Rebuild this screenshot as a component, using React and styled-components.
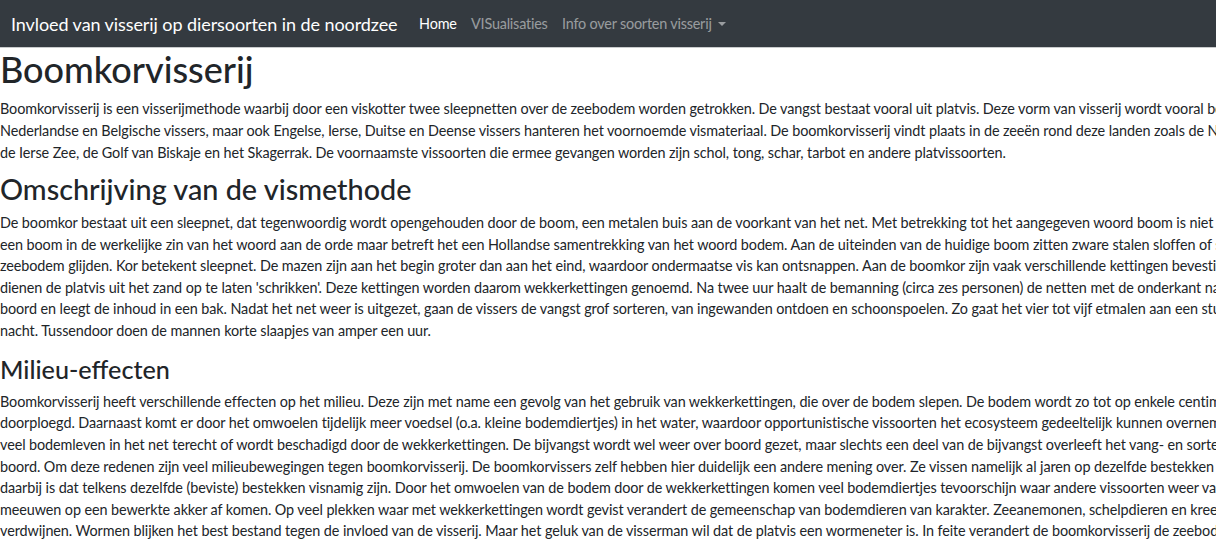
import React from "react";
import styled, { createGlobalStyle } from "styled-components";

const FONT = `"Segoe UI", Lato, "Open Sans", sans-serif`;

const Global = createGlobalStyle`
  html, body {
    margin: 0;
    padding: 0;
    background: #fff;
    overflow: hidden;
  }
  body {
    font-family: ${FONT};
    color: #212529;
  }
`;

const Page = styled.div`
  width: 1216px;
  height: 540px;
  overflow: hidden;
`;

const NavBar = styled.nav`
  display: flex;
  align-items: center;
  height: 46px;
  padding: 1px 11px 0;
  background: #343a40;
  border-bottom: 1px solid #c9cbcd;
  box-sizing: content-box;
`;

const Brand = styled.a`
  font-size: 18px;
  line-height: 27px;
  letter-spacing: -0.08px;
  color: #fff;
  margin-right: 14.4px;
  white-space: nowrap;
  text-decoration: none;
`;

const NavList = styled.ul`
  display: flex;
  list-style: none;
  margin: 0;
  padding: 0;
`;

const NavLink = styled.a`
  display: block;
  padding: 7px 7.2px;
  font-size: 14.4px;
  line-height: 21.6px;
  letter-spacing: -0.2px;
  white-space: nowrap;
  text-decoration: none;
  color: ${(p) => (p.$active ? "#fff" : "rgba(255,255,255,0.5)")};
  ${(p) =>
    p.$dropdown &&
    `
    &::after {
      content: "";
      display: inline-block;
      margin-left: 6.5px;
      vertical-align: 0.255em;
      border-top: 0.3em solid;
      border-right: 0.3em solid transparent;
      border-left: 0.3em solid transparent;
      border-bottom: 0;
    }
  `}
`;

const Main = styled.main`
  padding: 0;
`;

const Title = styled.h1`
  margin: 0 0 7.2px;
  font-size: 36px;
  line-height: 43.2px;
  font-weight: 500;
  white-space: nowrap;
`;

const SectionTitle = styled.h2`
  margin: 8.8px 0 5.4px;
  font-size: 28.8px;
  line-height: 34.56px;
  font-weight: 500;
  white-space: nowrap;
`;

const SubTitle = styled.h3`
  margin: 12.8px 0 6.3px;
  font-size: 25.2px;
  line-height: 30.24px;
  font-weight: 500;
  white-space: nowrap;
`;

const Paragraph = styled.p`
  margin: 0;
  font-size: 14.4px;
  line-height: 21.6px;
  letter-spacing: -0.09px;
`;

const Line = styled.span`
  display: block;
  white-space: nowrap;
`;

const headings = { 1: Title, 2: SectionTitle, 3: SubTitle };

const sections = [
  {
    level: 1,
    title: "Boomkorvisserij",
    lines: [
      "Boomkorvisserij is een visserijmethode waarbij door een viskotter twee sleepnetten over de zeebodem worden getrokken. De vangst bestaat vooral uit platvis. Deze vorm van visserij wordt vooral bedreven door",
      "Nederlandse en Belgische vissers, maar ook Engelse, Ierse, Duitse en Deense vissers hanteren het voornoemde vismateriaal. De boomkorvisserij vindt plaats in de zeeën rond deze landen zoals de Noordzee,",
      "de Ierse Zee, de Golf van Biskaje en het Skagerrak. De voornaamste vissoorten die ermee gevangen worden zijn schol, tong, schar, tarbot en andere platvissoorten.",
    ],
  },
  {
    level: 2,
    title: "Omschrijving van de vismethode",
    lines: [
      "De boomkor bestaat uit een sleepnet, dat tegenwoordig wordt opengehouden door de boom, een metalen buis aan de voorkant van het net. Met betrekking tot het aangegeven woord boom is niet echt",
      "een boom in de werkelijke zin van het woord aan de orde maar betreft het een Hollandse samentrekking van het woord bodem. Aan de uiteinden van de huidige boom zitten zware stalen sloffen of sleffen die over de",
      "zeebodem glijden. Kor betekent sleepnet. De mazen zijn aan het begin groter dan aan het eind, waardoor ondermaatse vis kan ontsnappen. Aan de boomkor zijn vaak verschillende kettingen bevestigd. Deze kettingen",
      "dienen de platvis uit het zand op te laten 'schrikken'. Deze kettingen worden daarom wekkerkettingen genoemd. Na twee uur haalt de bemanning (circa zes personen) de netten met de onderkant naar boven aan",
      "boord en leegt de inhoud in een bak. Nadat het net weer is uitgezet, gaan de vissers de vangst grof sorteren, van ingewanden ontdoen en schoonspoelen. Zo gaat het vier tot vijf etmalen aan een stuk door, dag en",
      "nacht. Tussendoor doen de mannen korte slaapjes van amper een uur.",
    ],
  },
  {
    level: 3,
    title: "Milieu-effecten",
    lines: [
      "Boomkorvisserij heeft verschillende effecten op het milieu. Deze zijn met name een gevolg van het gebruik van wekkerkettingen, die over de bodem slepen. De bodem wordt zo tot op enkele centimeters diep",
      "doorploegd. Daarnaast komt er door het omwoelen tijdelijk meer voedsel (o.a. kleine bodemdiertjes) in het water, waardoor opportunistische vissoorten het ecosysteem gedeeltelijk kunnen overnemen. Verder komt er",
      "veel bodemleven in het net terecht of wordt beschadigd door de wekkerkettingen. De bijvangst wordt wel weer over boord gezet, maar slechts een deel van de bijvangst overleeft het vang- en sorteerproces aan",
      "boord. Om deze redenen zijn veel milieubewegingen tegen boomkorvisserij. De boomkorvissers zelf hebben hier duidelijk een andere mening over. Ze vissen namelijk al jaren op dezelfde bestekken en het opvallende",
      "daarbij is dat telkens dezelfde (beviste) bestekken visnamig zijn. Door het omwoelen van de bodem door de wekkerkettingen komen veel bodemdiertjes tevoorschijn waar andere vissoorten weer van profiteren, zoals",
      "meeuwen op een bewerkte akker af komen. Op veel plekken waar met wekkerkettingen wordt gevist verandert de gemeenschap van bodemdieren van karakter. Zeeanemonen, schelpdieren en kreeften",
      "verdwijnen. Wormen blijken het best bestand tegen de invloed van de visserij. Maar het geluk van de visserman wil dat de platvis een wormeneter is. In feite verandert de boomkorvisserij de zeebodem in",
    ],
  },
];

export default function App() {
  return (
    <Page>
      <Global />
      <NavBar>
        <Brand href="#">Invloed van visserij op diersoorten in de noordzee</Brand>
        <NavList>
          <li>
            <NavLink href="#" $active>Home</NavLink>
          </li>
          <li>
            <NavLink href="#">VISualisaties</NavLink>
          </li>
          <li>
            <NavLink href="#" $dropdown>Info over soorten visserij</NavLink>
          </li>
        </NavList>
      </NavBar>
      <Main>
        {sections.map((s) => {
          const Heading = headings[s.level];
          return (
            <section key={s.title}>
              <Heading>{s.title}</Heading>
              <Paragraph>
                {s.lines.map((l, i) => (
                  <Line key={i}>{l}</Line>
                ))}
              </Paragraph>
            </section>
          );
        })}
      </Main>
    </Page>
  );
}
